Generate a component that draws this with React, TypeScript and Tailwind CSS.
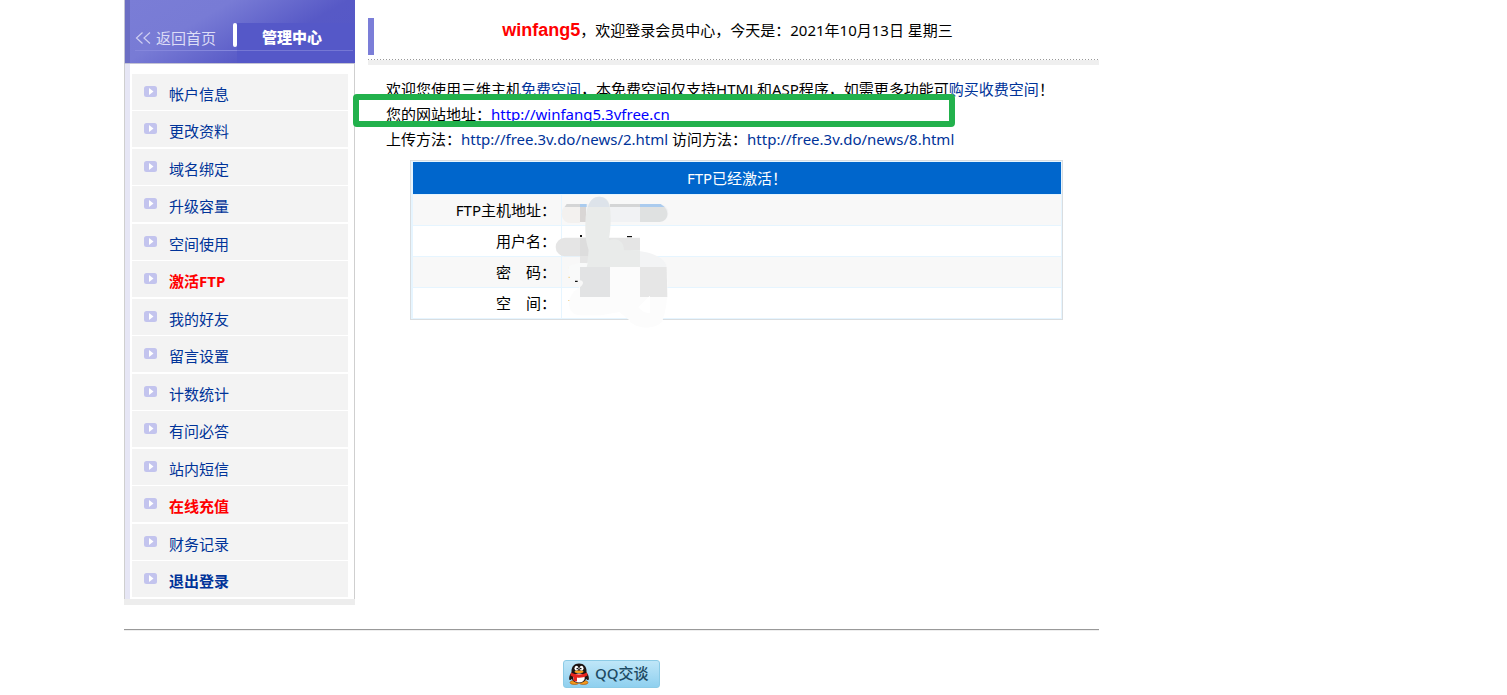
import React from "react";

type Item = { label: string; tone?: "alert" | "strong" };

const items: Item[] = [
  { label: "帐户信息" },
  { label: "更改资料" },
  { label: "域名绑定" },
  { label: "升级容量" },
  { label: "空间使用" },
  { label: "激活FTP", tone: "alert" },
  { label: "我的好友" },
  { label: "留言设置" },
  { label: "计数统计" },
  { label: "有问必答" },
  { label: "站内短信" },
  { label: "在线充值", tone: "alert" },
  { label: "财务记录" },
  { label: "退出登录", tone: "strong" },
];

const tones = {
  alert: "font-bold text-[#ff0000]",
  strong: "font-bold text-[#003399]",
  normal: "text-[#003399]",
};

const rows = ["FTP主机地址：", "用户名：", "密　码：", "空　间："];

function Bullet() {
  return (
    <svg width="13" height="11" viewBox="0 0 13 11" className="mb-[6px] shrink-0" aria-hidden="true">
      <rect width="13" height="11" rx="2.5" fill="#c3c4ee" />
      <path d="M5 2 9.500 5.500 5 9Z" fill="#fff" />
    </svg>
  );
}

function Sidebar() {
  return (
    <aside className="w-[231px] shrink-0">
      <div className="flex h-16 items-end border-b border-l border-[#c4c4d4] bg-[linear-gradient(150deg,#7a7dd6_0%,#787bd5_32%,#5759c6_66%,#5558c8_100%)]">
        <div className="h-full w-[5px] bg-[#6c6ec4]" />
        <div className="h-10 flex-1 pl-[5px]">
          <div className="flex h-7 justify-between border-b border-[#8587dc]">
            <a href="#home" className="mt-[3px] flex items-center gap-[5px] text-[15px] leading-5 text-[#dcdcf6]">
              <svg width="16" height="14" viewBox="0 0 16 14" fill="none" stroke="#cfcff2" strokeWidth="1.2" aria-hidden="true">
                <path d="M7.5 1.5 1.5 7l6 5.500M15 1.5 9 7l6 5.500" />
              </svg>
              返回首页
            </a>
            <span className="h-6 w-1 rounded-sm bg-white" />
          </div>
        </div>
        <div className="h-10 w-[118px] bg-[#5558c8] pr-[2px]">
          <div className="h-7 border-b border-[#7577d4] pt-[3px] pr-[6px] text-center">
            <a href="#center" className="text-[15px] leading-5 font-black text-white">
              管理中心
            </a>
          </div>
        </div>
      </div>
      <div className="border-x border-[#cfcfcf]">
        <ul className="flex flex-col border-l-[5px] border-[#e6e6f5] pt-[10px] pr-[6px] pl-[2px]">
          {items.map((it) => (
            <li key={it.label} className="mb-px even:mb-[2px]">
              <a
                href="#menu"
                className={`flex h-9 items-center gap-3 bg-[#f3f3f3] pt-1 pl-3 text-[15px] leading-5 ${tones[it.tone ?? "normal"]}`}
              >
                <Bullet />
                {it.label}
              </a>
            </li>
          ))}
        </ul>
      </div>
      <div className="h-[6px] bg-[#ededed]" />
    </aside>
  );
}

function Smudge() {
  return (
    <svg width="130" height="140" viewBox="0 0 390 420" aria-hidden="true">
      <path d="M90 135h6v6h-6zM231 138h15v4h-15zM75 272h8v4h-8z" fill="#111" />
      <path d="M54 231h4v4h-4zM55 260h5v4h-5zM54 330h6v3h-6z" fill="#f3d9a0" />
      <path d="M60 42H330a25 27 0 0 1 0 54H64a27 27 0 0 1-4-54Z" fill="#f1f2f4" />
      <path d="M48 51h42v48H60a26 26 0 0 1-12-48Z" fill="#f3f1ef" />
      <path d="M50 42h40v9H44zM180 42h90v9h-90z" fill="#d4d5d6" />
      <path d="M90 42h20v9H90zM270 42h62l12 9h-74z" fill="#aacbee" />
      <path d="M90 51h18v45H90z" fill="#d9d6d5" />
      <path d="M270 51h74c15 18 10 45-20 45h-54z" fill="#dfe1e1" />
      <path d="M45 143H270v88H90v-32H45a28 28 0 0 1 0-56Z" fill="#e5e5e5" />
      <path d="M90 143h25v55H90z" fill="#dddddd" />
      <path d="M222 181c80 0 123 20 128 50H270v-50Z" fill="#f3f4f5" />
      <path d="M148 20c-24 0-36 24-41 60-3 45 0 80 10 100l-6 40-21 11h180v-50h-48c0-28-20-40-46-30 8-40 7-80 3-104-3-18-15-27-31-27Z" fill="#e9ebea" />
      <path d="M148 20c-20 0-29 14-34 31h65c-4-20-15-31-31-31Z" fill="#dde3ea" />
      <path d="M113 220c-25-3-48 2-59 12l8 40 28-5v-36h20z" fill="#f9fafa" />
      <path d="M90 231H350c4 55 5 110-12 160-15 28-80 30-100 0l-30-25-55 10H90C55 376 45 330 75 302l25-20Z" fill="#fcfcfc" />
      <path d="M90 231h90v90H90v-30c12-8 12-18 0-20z" fill="#e2e3e4" />
      <path d="M270 231h80l2 90h-82z" fill="#e6e6e6" />
      <path d="M300 317 265 351c15 18 25 18 35 17Z" fill="#fff" />
    </svg>
  );
}

function FtpTable() {
  return (
    <div className="relative mt-2 mr-9 ml-[43px] border border-[#d9dde0] bg-[#e6f5ff] pt-px pr-px pl-[2px]">
      <table className="w-full border-separate border-spacing-0 text-[15px] leading-5">
        <thead>
          <tr>
            <th colSpan={2} className="h-[33px] border-b border-[#e6f5ff] bg-[#0066cc] p-0 font-normal text-white">
              FTP已经激活！
            </th>
          </tr>
        </thead>
        <tbody>
          {rows.map((r) => (
            <tr key={r} className="h-[31px] bg-white odd:bg-[#f8f8f8]">
              <th scope="row" className="w-[149px] border-r border-b border-[#e6f5ff] p-0 pr-[5px] text-right font-normal whitespace-nowrap">
                {r}
              </th>
              <td className="border-b border-[#e6f5ff] p-0" />
            </tr>
          ))}
        </tbody>
      </table>
      <div className="absolute top-[29px] left-[139px]">
        <Smudge />
      </div>
    </div>
  );
}

function Penguin() {
  return (
    <svg width="20" height="22" viewBox="0 0 40 44" aria-hidden="true">
      <ellipse cx="11" cy="39" rx="9" ry="4" fill="#f59a1b" stroke="#8c3a00" />
      <ellipse cx="29" cy="39" rx="9" ry="4" fill="#f59a1b" stroke="#8c3a00" />
      <path d="M6 18C1 23-1 30 1 34c2 1 5-2 6-4M34 18c5 5 7 12 5 16-2 1-5-2-6-4" fill="#2a1512" />
      <path d="M20 1C10 1 5 8 5 16v11c0 8 6 13 15 13s15-5 15-13V16C35 8 30 1 20 1Z" fill="#1c1414" />
      <ellipse cx="20" cy="30" rx="11.500" ry="9" fill="#fff" />
      <ellipse cx="15" cy="10.500" rx="4" ry="5" fill="#fff" />
      <ellipse cx="25" cy="10.500" rx="4" ry="5" fill="#fff" />
      <circle cx="16.500" cy="11" r="1.700" fill="#111" />
      <circle cx="23.500" cy="11" r="1.700" fill="#111" />
      <ellipse cx="20" cy="17.500" rx="9" ry="2.500" fill="#f7a01c" />
      <path d="M4 19c9 5 23 5 32 0l1 6c-7 4-15 5-21 4v8l-7-1v-8l-6-3Z" fill="#e6231e" />
    </svg>
  );
}

export default function App() {
  return (
    <div
      lang="zh-CN"
      className="min-h-screen bg-white pl-[124px] font-['Noto_Sans','Noto_Sans_CJK_SC',sans-serif] text-[15px] text-black"
    >
      <div className="max-w-[975px]">
        <div className="flex gap-3">
          <Sidebar />
          <main className="min-w-0 flex-1">
            <header className="pt-[18px]">
              <div className="ml-px flex h-[37px] border-l-[6px] border-[#7b7ed8]">
                <p className="flex-1 pr-[18px] text-center leading-6">
                  <b className="font-['Liberation_Sans',sans-serif] text-lg leading-6 text-[#ff0000]">winfang5</b>
                  ，欢迎登录会员中心，今天是：2021年10月13日 星期三
                </p>
              </div>
              <div className="mt-1 ml-px h-[6px] bg-[#efefef]">
                <div className="h-px bg-[repeating-linear-gradient(90deg,#999_0_1px,#fff_1px_3px)]" />
              </div>
            </header>
            <div className="relative pt-3 pl-[19px] leading-[25px] whitespace-nowrap">
              <p>
                欢迎您使用三维主机
                <a href="#free" className="text-[#003399]">免费空间</a>
                ，本免费空间仅支持HTML和ASP程序，如需更多功能可
                <a href="#buy" className="text-[#003399]">购买收费空间</a>！
              </p>
              <p>
                您的网站地址：
                <a href="#site" className="text-[#0000ff]">http://winfang5.3vfree.cn</a>
              </p>
              <p>
                上传方法：
                <a href="#upload" className="text-[#003399]">http://free.3v.do/news/2.html</a>
                {" 访问方法："}
                <a href="#visit" className="text-[#003399]">http://free.3v.do/news/8.html</a>
              </p>
              <div className="pointer-events-none absolute top-[29px] -left-[14px] h-[33px] w-[602px] rounded border-[6px] border-[#22b14c]" />
            </div>
            <FtpTable />
          </main>
        </div>
        <footer className="mt-6 border-t border-[#999]">
          <div className="flex justify-center border-t border-[#eee] pt-[29px]">
            <button
              type="button"
              className="flex h-7 w-[97px] items-center gap-[6px] rounded-[3px] border border-[#8ccbe6] bg-linear-to-b from-[#bfe6f8] to-[#8fd0ef] pb-px pl-[5px] text-[15px] font-medium text-[#1d4a63]"
            >
              <Penguin />
              QQ交谈
            </button>
          </div>
        </footer>
      </div>
    </div>
  );
}
